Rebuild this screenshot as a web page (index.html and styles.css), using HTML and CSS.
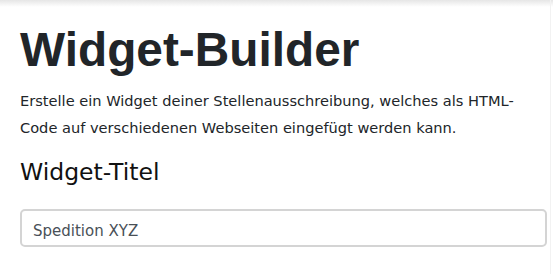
FILE: index.html
```html
<!DOCTYPE html>
<html lang="de">
<head>
<meta charset="utf-8">
<title>Widget-Builder</title>
<link rel="stylesheet" href="styles.css">
</head>
<body>
<main class="page">
  <h1 class="title">Widget-Builder</h1>
  <p class="lead">Erstelle ein Widget deiner Stellenausschreibung, welches als HTML-Code auf verschiedenen Webseiten eingefügt werden kann.</p>
  <h2 class="section-title">Widget-Titel</h2>
  <input class="field" type="text" value="Spedition XYZ">
</main>
</body>
</html>
```

FILE: styles.css
```css
html, body {
  margin: 0;
  padding: 0;
  background: #fff;
}

body {
  font-family: "DejaVu Sans", "Liberation Sans", sans-serif;
  color: #212529;
  background: linear-gradient(#e6e6e6, #ffffff 7px) no-repeat;
  min-height: 274px;
}

.page {
  box-sizing: border-box;
  width: 551px;
  min-height: 274px;
  padding: 21px 3px 0 20px;
  border-right: 1px solid #f2f2f2;
  display: flex;
  flex-direction: column;
}

.title {
  margin: 0;
  font-family: "Liberation Sans", Arial, sans-serif;
  font-size: 47.8px;
  font-weight: 700;
  line-height: 1.2;
  color: #212529;
}

.lead {
  margin: 9px 0 0;
  font-size: 14.6px;
  line-height: 27px;
  color: #212529;
}

.section-title {
  margin: 17px 0 0;
  font-size: 23.5px;
  font-weight: 400;
  line-height: 1.2;
  color: #111;
}

.field {
  box-sizing: border-box;
  margin: 22px 0 0;
  width: 100%;
  height: 38px;
  padding: 7px 11px 0;
  border: 2px solid #d4d4d4;
  border-radius: 5px;
  font-family: "DejaVu Sans", "Liberation Sans", sans-serif;
  font-size: 15px;
  color: #495057;
  background: #fff;
  outline: none;
}
```
